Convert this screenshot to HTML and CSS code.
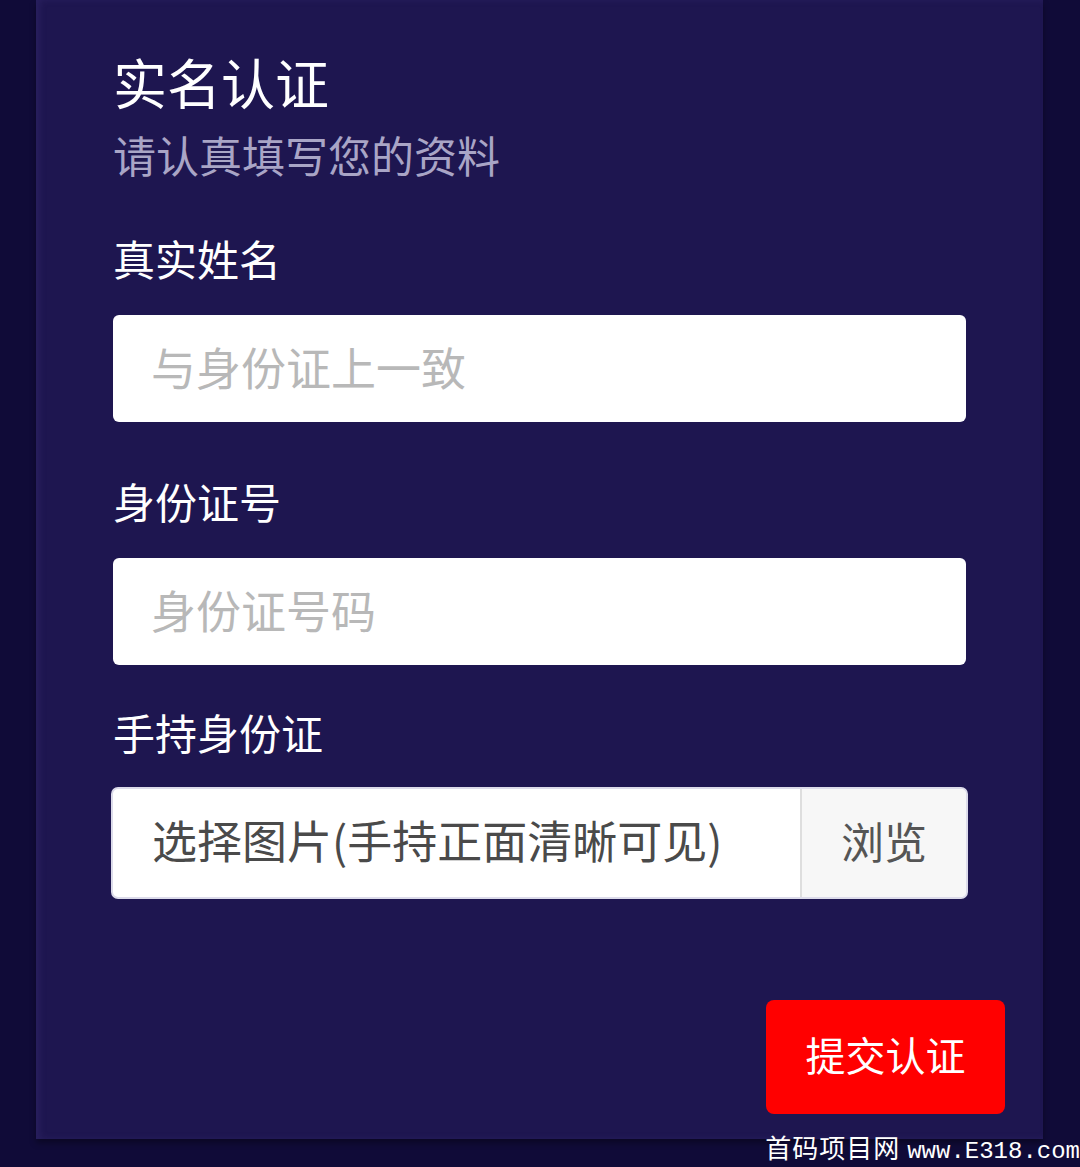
FILE: index.html
```html
<!DOCTYPE html>
<html lang="zh-CN">
<head>
    <meta charset="UTF-8">
    <meta name="viewport" content="width=device-width, initial-scale=1.0">
    <title>实名认证</title>
    <link rel="stylesheet" href="styles.css">
</head>
<body>
    <div class="panel">
        <h1 class="title">实名认证</h1>
        <p class="subtitle">请认真填写您的资料</p>

        <form class="form">
            <label class="label" for="realName">真实姓名</label>
            <input class="field" id="realName" type="text" placeholder="与身份证上一致">

            <label class="label label-2" for="idNo">身份证号</label>
            <input class="field field-2" id="idNo" type="text" placeholder="身份证号码">

            <label class="label label-3">手持身份证</label>
            <div class="file-box">
                <span class="file-text">选择图片(手持正面清晰可见)</span>
                <span class="file-btn">浏览</span>
            </div>

            <div class="actions">
                <button class="submit" type="button">提交认证</button>
            </div>
        </form>
    </div>

    <div class="watermark">首码项目网 <span class="watermark-url">www.E318.com</span></div>
</body>
</html>
```

FILE: styles.css
```css
body {
    margin: 0;
    height: 1167px;
    overflow: hidden;
    background-color: #100b38;
    font-family: "Noto Sans CJK SC", "Noto Sans", sans-serif;
    position: relative;
}

.panel {
    margin-left: 36px;
    width: 1007px;
    box-sizing: border-box;
    padding: 50px 77px 25px;
    background-color: #1e1650;
    box-shadow: inset 4px 0 6px rgba(60, 50, 120, 0.35), 0 4px 6px rgba(0, 0, 0, 0.35);
}

.title {
    margin: 0;
    font-size: 54px;
    line-height: 1.2;
    font-weight: 400;
    color: #ffffff;
}

.subtitle {
    margin: 14px 0 0;
    font-size: 43px;
    line-height: 1.2;
    color: #a9a5c6;
}

.form {
    margin: 0;
    display: flex;
    flex-direction: column;
}

.label {
    display: block;
    margin-top: 53px;
    font-size: 42px;
    line-height: 1.2;
    color: #ffffff;
}

.label-2 {
    margin-top: 54px;
}

.label-3 {
    margin-top: 42px;
}

.field {
    margin-top: 31px;
    height: 107px;
    box-sizing: border-box;
    border: none;
    border-radius: 6px;
    padding: 0 38px 4px;
    background-color: #ffffff;
    font-family: inherit;
    font-size: 45px;
    color: #444;
    outline: none;
}

.field-2 {
    margin-top: 32px;
}

.field::placeholder {
    color: #b8b8b8;
}

.file-box {
    margin: 29px -2px 0;
    height: 112px;
    box-sizing: border-box;
    border: 2px solid #dcdbea;
    border-radius: 7px;
    background-color: #ffffff;
    display: flex;
    overflow: hidden;
}

.file-text {
    flex: 1;
    display: flex;
    align-items: center;
    padding: 0 0 6px 39px;
    font-size: 45px;
    color: #4a4a4a;
}

.file-btn {
    width: 164px;
    display: flex;
    align-items: center;
    justify-content: center;
    padding-bottom: 6px;
    border-left: 2px solid #dedede;
    background-color: #f7f7f7;
    font-size: 43px;
    color: #555;
}

.actions {
    display: flex;
    justify-content: flex-end;
    margin: 101px -39px 0 0;
}

.submit {
    width: 239px;
    height: 114px;
    padding-bottom: 6px;
    border: none;
    border-radius: 8px;
    background-color: #ff0000;
    color: #ffffff;
    font-family: inherit;
    font-size: 40px;
    cursor: pointer;
}

.watermark {
    position: absolute;
    right: 0;
    bottom: 0;
    font-size: 26px;
    line-height: 30px;
    color: #ffffff;
    letter-spacing: 1px;
}

.watermark-url {
    font-family: "Liberation Mono", monospace;
    font-size: 24px;
    letter-spacing: 0;
}
```
